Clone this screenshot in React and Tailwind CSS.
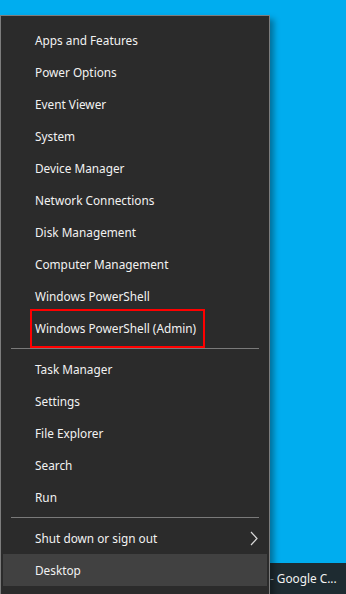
import React from "react";

const group1 = [
  "Apps and Features",
  "Power Options",
  "Event Viewer",
  "System",
  "Device Manager",
  "Network Connections",
  "Disk Management",
  "Computer Management",
  "Windows PowerShell",
  "Windows PowerShell (Admin)",
];
const group2 = ["Task Manager", "Settings", "File Explorer", "Search", "Run"];

function Item({ label, boxed, highlight, chevron }) {
  return (
    <div
      className={`relative flex h-[32px] items-center pl-[32px] pt-[1px] text-[11.8px] text-[#f2f2f2] ${
        highlight ? "bg-[#414141]" : ""
      }`}
    >
      <span>{label}</span>
      {boxed && (
        <div className="absolute left-[27px] top-[-3px] h-[39px] w-[175px] border-2 border-[#ff0000]" />
      )}
      {chevron && (
        <svg
          className="absolute right-[9px] top-[9px]"
          width="8"
          height="15"
          viewBox="0 0 8 15"
          fill="none"
        >
          <path d="M1 1 L7 7.5 L1 14" stroke="#d8d8d8" strokeWidth="1.2" />
        </svg>
      )}
    </div>
  );
}

function Sep() {
  return <div className="mx-[8px] my-[4px] h-px bg-[#7a7a7a]" />;
}

export default function App() {
  return (
    <div
      className="relative h-[594px] w-[346px] overflow-hidden bg-[#00adef]"
      style={{ fontFamily: '"Noto Sans", "Open Sans", sans-serif' }}
    >
      <div className="absolute bottom-0 left-0 right-0 flex h-[31px] items-center bg-[#1e2b31] pl-[270px] pt-[1px] text-[11.8px] text-[#f2f2f2]">
        <span className="mr-[3px] text-[#9aa3a7]">-</span>
        <span>Google C...</span>
      </div>
      <div className="absolute left-0 top-[15px] h-[600px] w-[270px] border-l border-r border-t border-[#7d7d7d] bg-[#2b2b2b] px-[2px] pt-[8px] shadow-[4px_4px_6px_rgba(0,0,0,0.35)]">
        {group1.map((l, i) => (
          <Item key={l} label={l} boxed={i === 9} />
        ))}
        <Sep />
        {group2.map((l) => (
          <Item key={l} label={l} />
        ))}
        <Sep />
        <Item label="Shut down or sign out" chevron />
        <Item label="Desktop" highlight />
      </div>
    </div>
  );
}
